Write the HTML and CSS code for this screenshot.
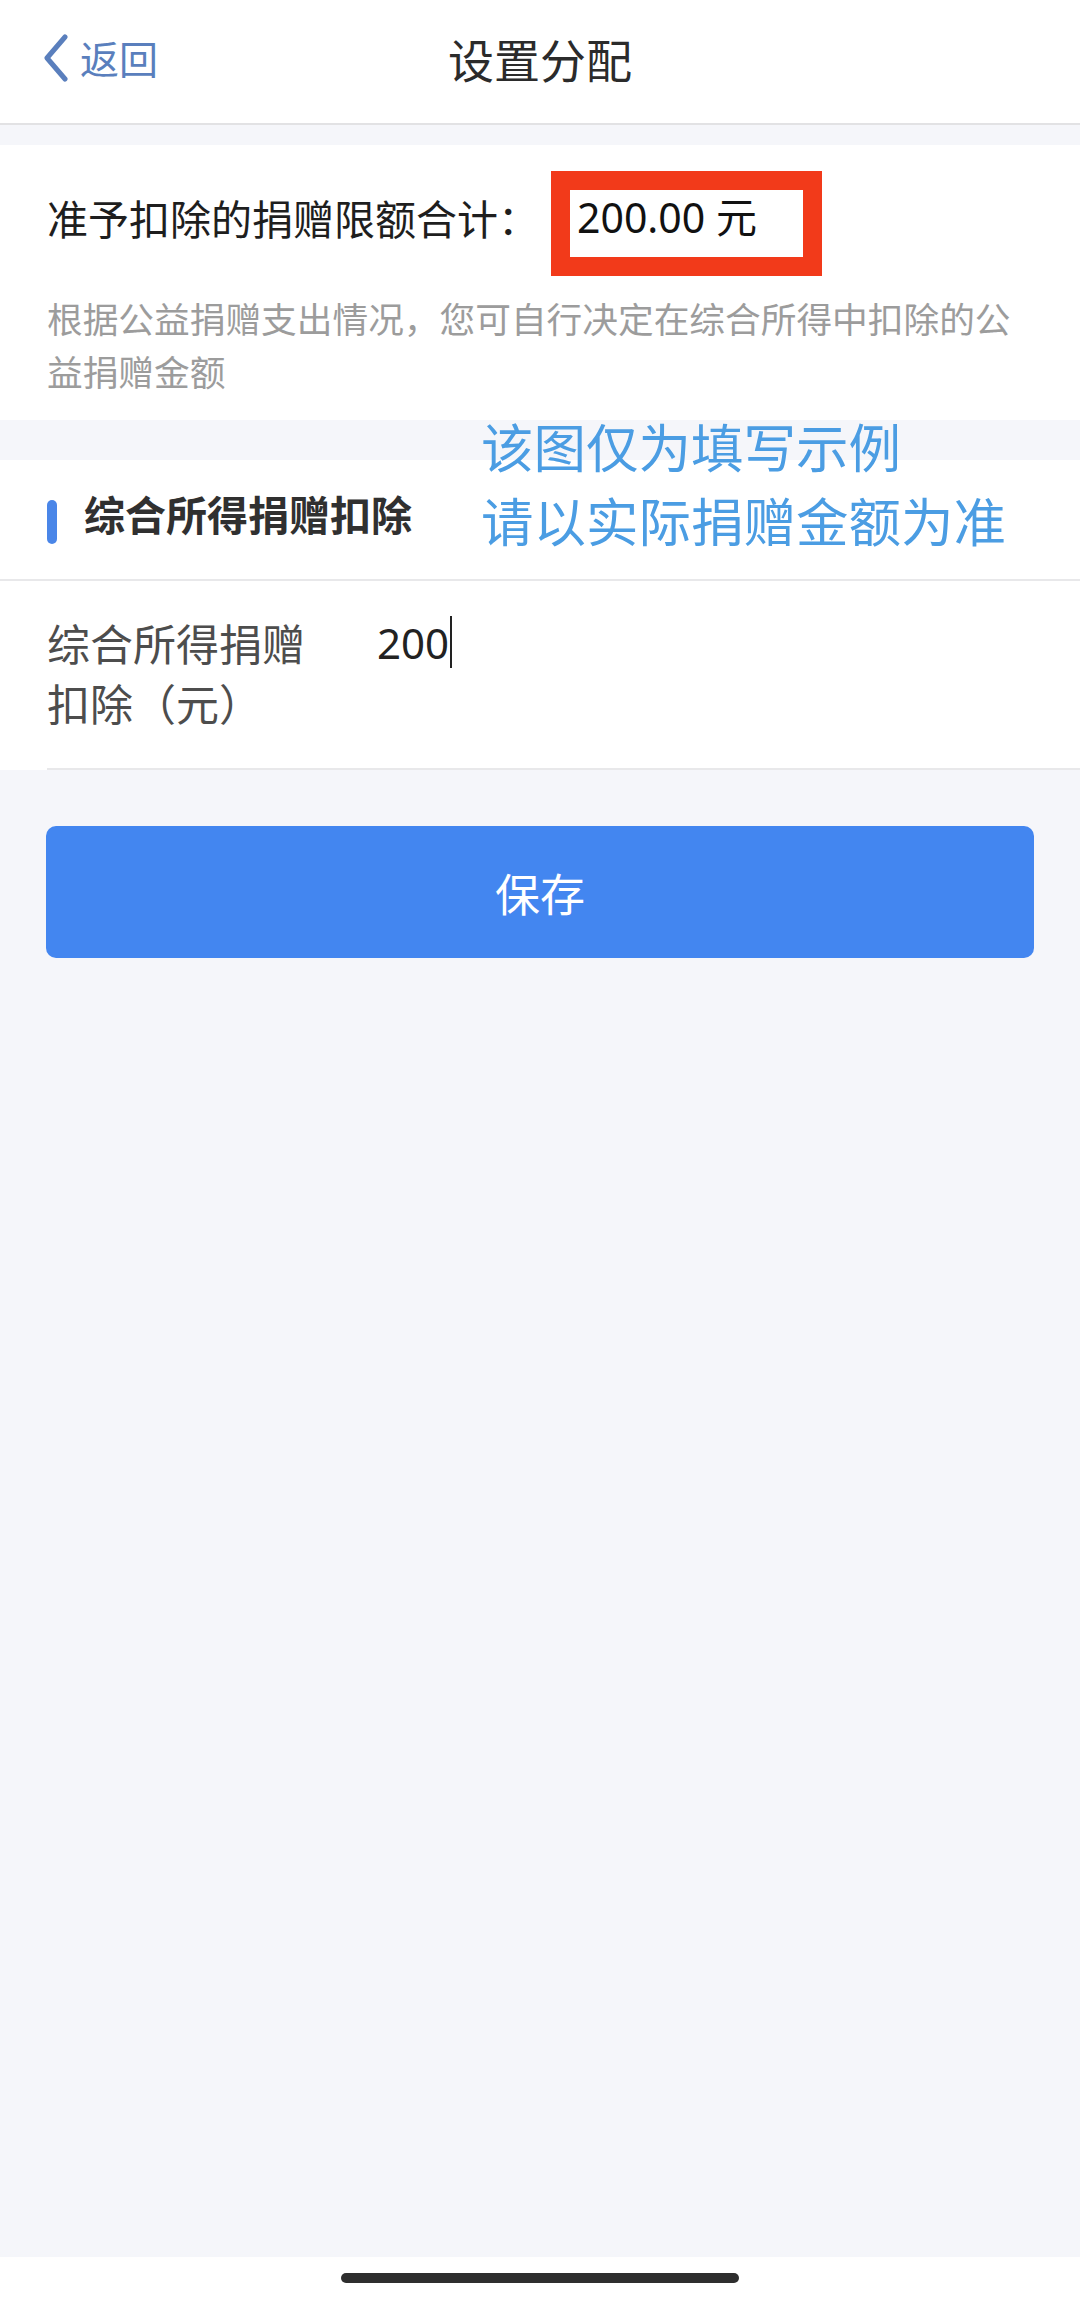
FILE: index.html
```html
<!DOCTYPE html>
<html lang="zh-CN">
<head>
<meta charset="utf-8">
<title>设置分配</title>
<link rel="stylesheet" href="styles.css">
</head>
<body>
<div class="screen">
  <header class="navbar">
    <div class="back">
      <svg class="back-icon" width="28" height="48" viewBox="0 0 28 48"><polyline points="23,3 5,24 23,45" fill="none" stroke="#5a7fbd" stroke-width="5" stroke-linecap="round" stroke-linejoin="round"/></svg>
      <span class="back-text">返回</span>
    </div>
    <h1 class="title">设置分配</h1>
    <div></div>
  </header>

  <main class="content">
    <section class="card summary">
      <div class="limit-row">
        <span class="limit-label">准予扣除的捐赠限额合计：</span>
        <span class="amount">200.00 元</span>
      </div>
      <p class="desc">根据公益捐赠支出情况，您可自行决定在综合所得中扣除的公益捐赠金额</p>
    </section>

    <section class="card deduction">
      <div class="note">
        <div>该图仅为填写示例</div>
        <div>请以实际捐赠金额为准</div>
      </div>
      <div class="section-head">
        <span class="bar"></span>
        <span class="section-title">综合所得捐赠扣除</span>
      </div>
      <div class="field-row">
        <span class="field-label">综合所得捐赠扣除（元）</span>
        <span class="field-value">200<span class="caret"></span></span>
      </div>
    </section>

    <div class="actions">
      <button class="save-btn">保存</button>
    </div>
  </main>

  <footer class="home-area">
    <span class="home-indicator"></span>
  </footer>
</div>
</body>
</html>
```

FILE: styles.css
```css
*, *::before, *::after { box-sizing: border-box; }

html, body {
  margin: 0;
  padding: 0;
}

body {
  width: 1080px;
  height: 2300px;
  background: #f5f6fa;
  font-family: "Noto Sans CJK SC", "Noto Sans", sans-serif;
  color: #222;
}

.screen {
  display: flex;
  flex-direction: column;
  height: 2300px;
}

.navbar {
  height: 125px;
  background: #fff;
  border-bottom: 2px solid #e2e2e4;
  display: grid;
  grid-template-columns: 1fr auto 1fr;
  align-items: center;
  padding-bottom: 8px;
}

.back {
  display: flex;
  align-items: center;
  gap: 10px;
  padding-left: 42px;
  color: #5a7fbd;
}

.back-icon { display: block; }

.back-text {
  font-size: 39px;
  line-height: 1;
}

.title {
  margin: 0;
  font-size: 46px;
  font-weight: 400;
  color: #2b2b2b;
  line-height: 1;
}

.content {
  flex: 1;
  display: flex;
  flex-direction: column;
}

.card {
  background: #fff;
}

.summary {
  margin-top: 20px;
  padding: 42px 60px 23px 47px;
}

.limit-row {
  display: grid;
  grid-template-columns: 530px auto;
  align-items: center;
  height: 60px;
}

.limit-label {
  font-size: 41px;
  line-height: 60px;
  color: #1e1e1e;
  white-space: nowrap;
}

.amount {
  position: relative;
  font-size: 41px;
  line-height: 60px;
  color: #111;
  font-family: "Noto Sans", "Noto Sans CJK SC", sans-serif;
}

.amount::before {
  content: "";
  position: absolute;
  left: -26px;
  top: -16px;
  width: 271px;
  height: 105px;
  border: 19px solid #f23a1a;
}

.desc {
  margin: 44px 0 0;
  font-size: 35.7px;
  line-height: 53px;
  color: #9c9c9c;
}

.deduction {
  position: relative;
  margin-top: 40px;
}

.note {
  position: absolute;
  left: 481px;
  top: -52px;
  font-size: 52.5px;
  line-height: 74px;
  color: #4b9de3;
  white-space: nowrap;
}

.section-head {
  height: 121px;
  display: flex;
  align-items: center;
  gap: 27px;
  padding-left: 47px;
  padding-bottom: 12px;
  border-bottom: 2px solid #e8e8ea;
}

.bar {
  width: 10px;
  height: 44px;
  border-radius: 5px;
  background: #4a86e8;
  margin-top: 16px;
}

.section-title {
  font-size: 41px;
  font-weight: 700;
  color: #303030;
  line-height: 1;
}

.field-row {
  margin-left: 47px;
  display: grid;
  grid-template-columns: 330px 1fr;
  align-items: start;
  padding: 31px 0 36px;
  border-bottom: 2px solid #e8e8ea;
}

.field-label {
  max-width: 280px;
  font-size: 43px;
  line-height: 60px;
  color: #4d4d4d;
}

.field-value {
  display: flex;
  align-items: center;
  height: 60px;
  font-size: 42px;
  color: #222;
  font-family: "Noto Sans", "Noto Sans CJK SC", sans-serif;
}

.caret {
  display: inline-block;
  width: 2px;
  height: 52px;
  background: #222;
  margin-left: 1px;
}

.actions {
  padding: 56px 46px 0;
}

.save-btn {
  display: block;
  width: 988px;
  height: 132px;
  border: none;
  border-radius: 10px;
  background: #4386f0;
  color: #fff;
  font-family: "Noto Sans CJK SC", sans-serif;
  font-size: 45px;
  padding: 0;
}

.home-area {
  height: 43px;
  background: #fff;
  display: flex;
  justify-content: center;
  padding-top: 16px;
}

.home-indicator {
  width: 398px;
  height: 10px;
  border-radius: 5px;
  background: #2e2e2e;
}
```
